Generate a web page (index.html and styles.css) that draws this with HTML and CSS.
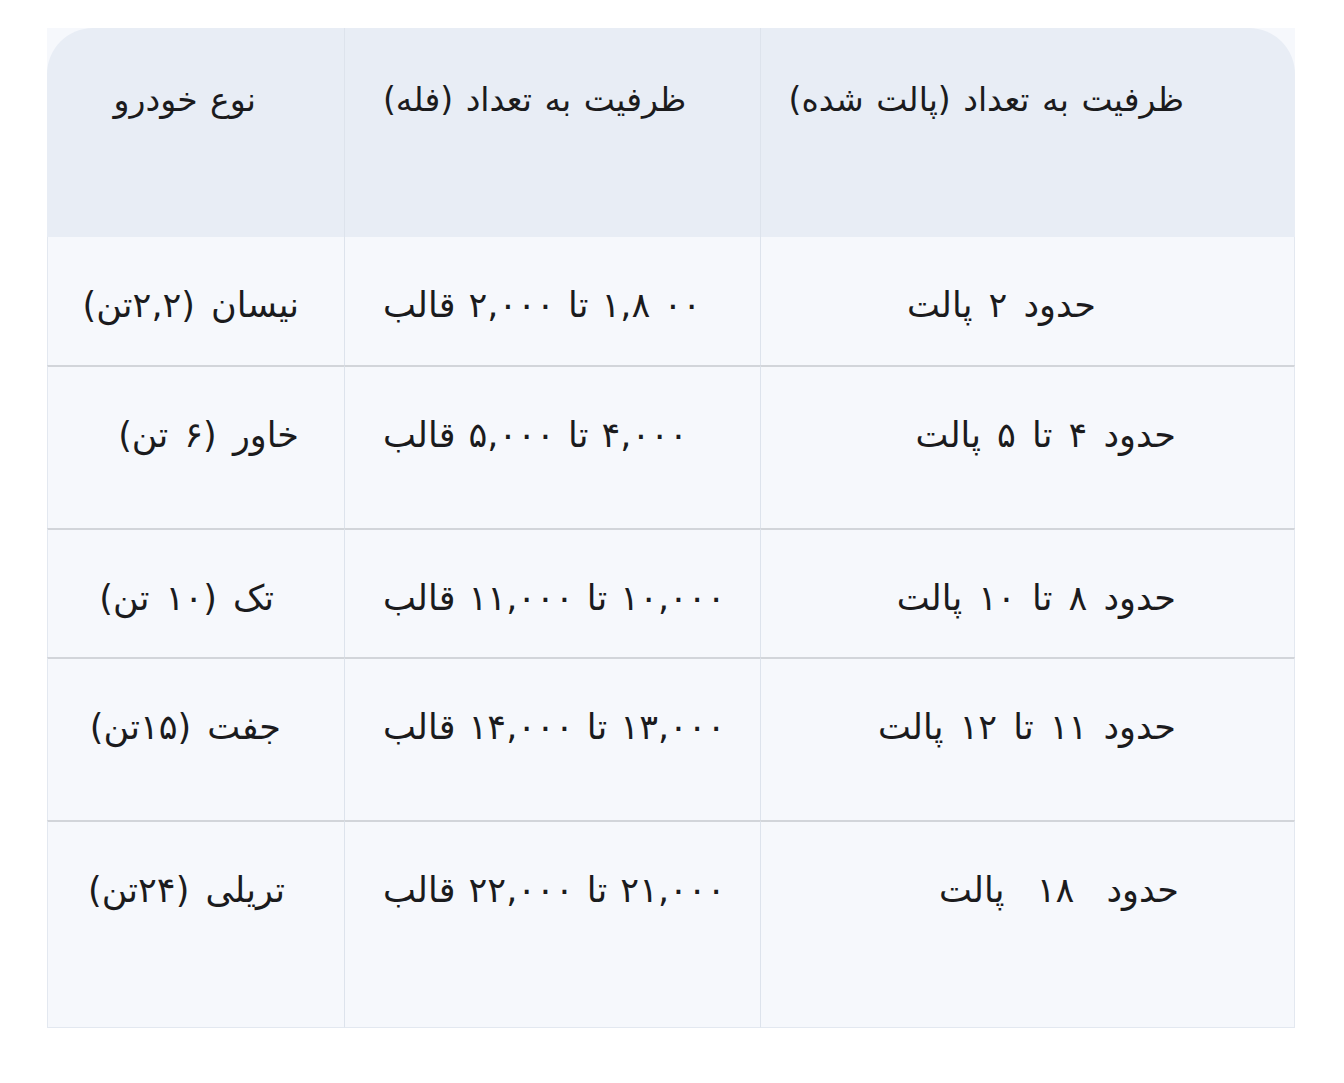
FILE: index.html
```html
<!DOCTYPE html>
<html lang="fa">
<head>
<meta charset="utf-8">
<link rel="stylesheet" href="styles.css">
</head>
<body>
<table class="cap-table">
  <colgroup>
    <col class="c1"><col class="c2"><col class="c3">
  </colgroup>
  <thead>
    <tr class="head">
      <th class="col1 tl" dir="rtl">نوع خودرو</th>
      <th class="col2" dir="rtl">ظرفیت به تعداد (فله)</th>
      <th class="col3 tr" dir="rtl">ظرفیت به تعداد (پالت شده)</th>
    </tr>
  </thead>
  <tbody>
    <tr class="r1">
      <td class="col1" dir="rtl">نیسان (۲,۲تن)</td>
      <td class="col2" dir="rtl">۰۰ ۱,۸ تا ۲,۰۰۰ قالب</td>
      <td class="col3 narrow" dir="rtl">حدود ۲ پالت</td>
    </tr>
    <tr class="r2">
      <td class="col1" dir="rtl">خاور (۶ تن)</td>
      <td class="col2" dir="rtl">۴,۰۰۰ تا ۵,۰۰۰ قالب</td>
      <td class="col3" dir="rtl">حدود ۴ تا ۵ پالت</td>
    </tr>
    <tr class="r3">
      <td class="col1 in-69" dir="rtl">تک (۱۰ تن)</td>
      <td class="col2" dir="rtl">۱۰,۰۰۰ تا ۱۱,۰۰۰ قالب</td>
      <td class="col3" dir="rtl">حدود ۸ تا ۱۰ پالت</td>
    </tr>
    <tr class="r4">
      <td class="col1 in-65" dir="rtl">جفت (۱۵تن)</td>
      <td class="col2" dir="rtl">۱۳,۰۰۰ تا ۱۴,۰۰۰ قالب</td>
      <td class="col3" dir="rtl">حدود ۱۱ تا ۱۲ پالت</td>
    </tr>
    <tr class="r5">
      <td class="col1 in-60" dir="rtl">تریلی (۲۴تن)</td>
      <td class="col2" dir="rtl">۲۱,۰۰۰ تا ۲۲,۰۰۰ قالب</td>
      <td class="col3 last" dir="rtl">حدود&nbsp; ۱۸&nbsp; پالت</td>
    </tr>
  </tbody>
</table>
</body>
</html>
```

FILE: styles.css
```css
html, body {
  margin: 0;
  padding: 0;
  background: #ffffff;
}

body {
  padding: 28px 0 0 47px;
  font-family: "DejaVu Sans", "Noto Sans", sans-serif;
  color: #1b1b1d;
}

.cap-table {
  border-collapse: separate;
  border-spacing: 0;
  width: 1248px;
  table-layout: fixed;
  background: #f6f8fc;
}

.c1 { width: 297px; }
.c2 { width: 416px; }
.c3 { width: 535px; }

.cap-table th,
.cap-table td {
  vertical-align: top;
  font-size: 35px;
  line-height: 44px;
  padding-top: 46px;
  font-weight: normal;
  white-space: nowrap;
  word-spacing: 5px;
}

.cap-table th {
  background: #e8edf5;
  height: 209px;
  box-sizing: border-box;
  padding-top: 50px;
  font-size: 33px;
  word-spacing: 2px;
}

.cap-table td {
  box-sizing: border-box;
  border-top: 2px solid #d2d5da;
}

.cap-table tbody tr:first-child td {
  border-top: none;
}

.col1 { text-align: right; padding-right: 44px; padding-left: 0; }
.col1.in-69 { padding-right: 69px; }
.col1.in-65 { padding-right: 62px; }
.col1.in-60 { padding-right: 58px; }

.col2 { text-align: left; padding-left: 39px; padding-right: 0; border-left: 1px solid #dde3ec; }
td.col2 { word-spacing: 2px; letter-spacing: -1px; }

.col3 { text-align: right; padding-right: 118px; padding-left: 0; border-left: 1px solid #dde3ec; }
.col3.narrow { padding-right: 198px; }
.col3.last { padding-right: 115px; }

th.col1 { padding-right: 88px; }
th.col2 { padding-left: 39px; }
th.col3 { padding-right: 110px; }

tbody .col1 { border-left: 1px solid #e3e8f0; }
tbody .col3 { border-right: 1px solid #e3e8f0; }
tbody tr:last-child td { border-bottom: 1px solid #e3e8f0; }

.tl { border-top-left-radius: 46px; }
.tr { border-top-right-radius: 46px; }

.r1 td { height: 128px; }
.r2 td { height: 163px; }
.r3 td { height: 129px; }
.r4 td { height: 163px; }
.r5 td { height: 208px; }
```
